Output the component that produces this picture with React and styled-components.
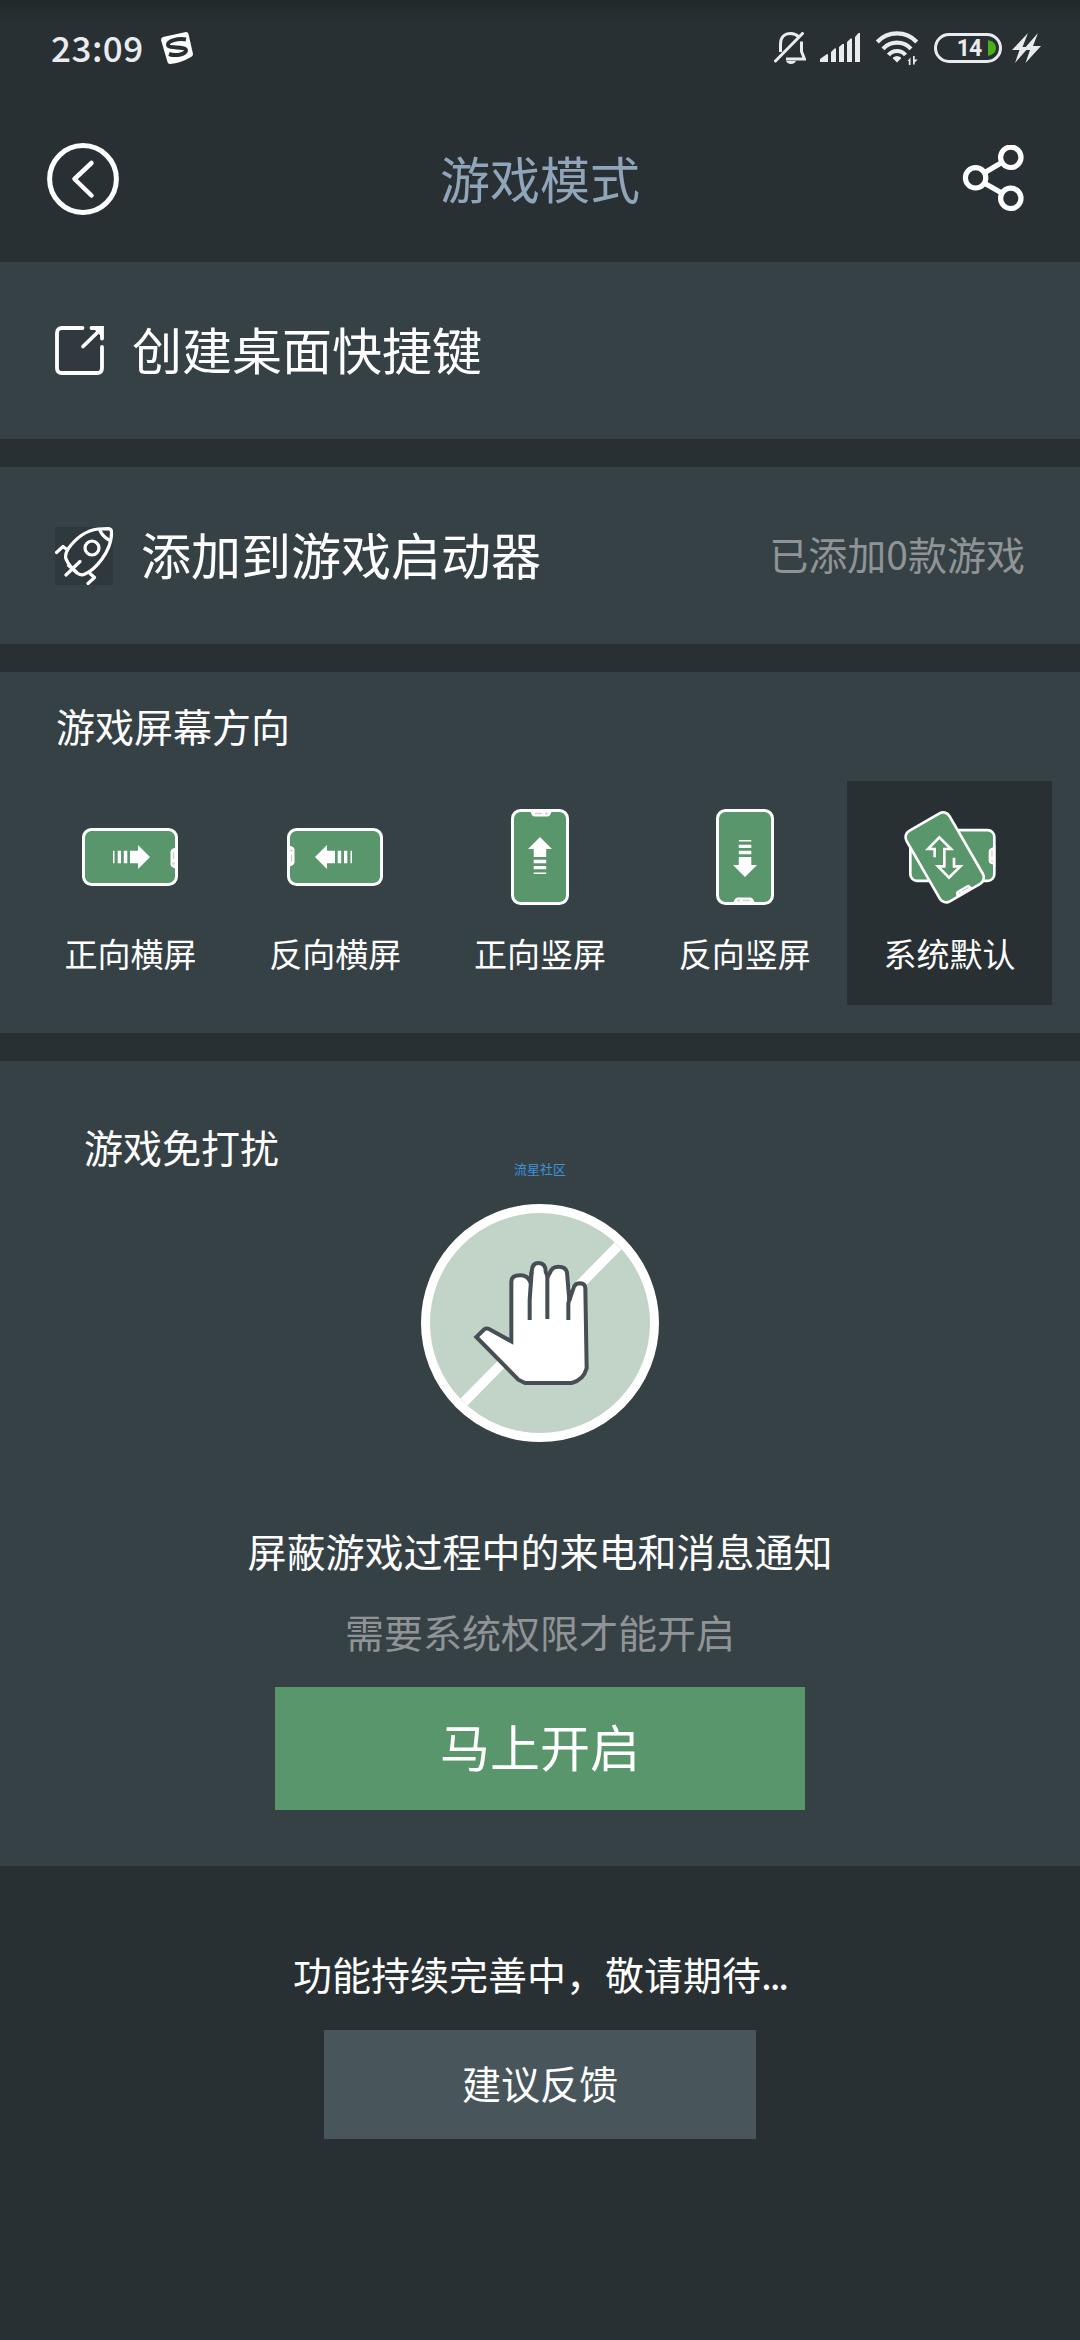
import React from "react";
import styled, { createGlobalStyle } from "styled-components";

const color = {
  page: "#293033",
  card: "#364145",
  green: "#59966b",
  slate: "#48565b",
  title: "#90a5b9",
  muted: "#909496",
  status: "#e9ebee",
};

const GlobalStyle = createGlobalStyle`
  * { box-sizing: border-box; }
  body { margin: 0; background: ${color.page}; }
  svg { display: block; flex: none; }
  button { border: 0; padding: 0; font: inherit; color: inherit; background: none; }
`;

const Screen = styled.div`
  width: 1080px;
  min-height: 2340px;
  display: flex;
  flex-direction: column;
  background: linear-gradient(#22292b 0, ${color.page} 24px);
  color: #fff;
  font-family: "Noto Sans CJK SC", "Noto Sans", sans-serif;
  font-size: 39px;
  line-height: 1;
  white-space: nowrap;
`;

const StatusBar = styled.div`
  height: 96px;
  padding: 0 39px 0 51px;
  display: flex;
  align-items: center;
  color: ${color.status};
`;

const Clock = styled.span`
  width: 110px;
  margin-bottom: 4px;
  font-size: 35px;
  font-weight: 500;
  letter-spacing: 0.5px;
`;

const StatusIcons = styled.div`
  margin-left: auto;
  display: flex;
  align-items: center;
`;

const Spacer = styled.span`
  width: ${(p) => p.$w}px;
`;

const Header = styled.header`
  height: 166px;
  padding: 0 56px 0 47px;
  display: grid;
  grid-template-columns: 72px 1fr 63px;
  align-items: center;
`;

const HeaderButton = styled.button`
  display: flex;
  justify-content: flex-end;
`;

const Title = styled.h1`
  margin: 0 0 5px;
  text-align: center;
  font-size: 50px;
  font-weight: 400;
  line-height: 50px;
  color: ${color.title};
`;

const Stack = styled.main`
  display: flex;
  flex-direction: column;
  gap: 28px;
`;

const Card = styled.section`
  background: ${color.card};
`;

const RowCard = styled(Card)`
  height: 177px;
  padding: 0 55px;
  display: flex;
  align-items: center;
`;

const RowLabel = styled.span`
  margin: 0 0 6px 28px;
  font-size: 50px;
`;

const RowValue = styled.span`
  margin: 0 0 4px auto;
  color: ${color.muted};
`;

const OrientationCard = styled(Card)`
  height: 361px;
  padding: 34px 28px 0;
`;

const SectionTitle = styled.h2`
  margin: 0;
  padding-left: 28px;
  font-size: 39px;
  line-height: 39px;
  font-weight: 400;
`;

const Options = styled.div`
  margin-top: 36px;
  display: grid;
  grid-template-columns: repeat(5, 1fr);
`;

const Option = styled.button`
  height: 224px;
  padding-top: 28px;
  display: flex;
  flex-direction: column;
  align-items: center;
  gap: 32px;
  font-size: 33px;
  line-height: 33px;
  background: ${(p) => (p.$selected ? color.page : "transparent")};
`;

const QuietCard = styled(Card)`
  height: 805px;
  padding: 66px 56px 0;
  display: flex;
  flex-direction: column;
  align-items: center;
`;

const QuietTitle = styled(SectionTitle)`
  align-self: stretch;
`;

const Credit = styled.span`
  margin-top: -4px;
  font-size: 13px;
  line-height: 14px;
  color: #3b93dc;
`;

const Line = styled.p`
  margin: ${(p) => p.$top}px 0 0;
  line-height: 40px;
  color: ${(p) => (p.$muted ? color.muted : "#fff")};
`;

const Dots = styled.span`
  letter-spacing: -2.2px;
`;

const Art = styled.div`
  margin-top: 28px;
`;

const EnableButton = styled.button`
  margin-top: 36px;
  padding-bottom: 7px;
  width: 530px;
  height: 123px;
  background: ${color.green};
  font-size: 50px;
`;

const Footer = styled.footer`
  padding-top: 87px;
  display: flex;
  flex-direction: column;
  align-items: center;
`;

const FeedbackButton = styled.button`
  margin-top: 37px;
  padding-bottom: 5px;
  width: 432px;
  height: 109px;
  background: ${color.slate};
  font-size: 39px;
`;

const InputMethodIcon = () => (
  <svg width="32" height="32" viewBox="0 0 32 32">
    <path d="M2 5 25 0q2 0 2.500 2L32 22q0 2-2 3-10 6-21 7-2 0-2.500-2L0 8q0-2 2-3z" fill="#fff" />
    <path d="M25 7.500C17 6 6.500 9 7 13 7.500 17 24 14 25 18 26 22 15 24.500 8 22" fill="none" stroke={color.page} strokeWidth="4" />
  </svg>
);

const MutedBellIcon = () => (
  <svg width="32" height="32" viewBox="0 0 32 32" fill="none" stroke={color.status} strokeWidth="3">
    <path d="M6.500 20V12C6.500 5 11 1.500 16.500 1.500q5 0 8 3.200M27.500 9.500v10l3 7.500H12" />
    <path d="M1.500 29 28.500 1.500" strokeLinecap="round" />
    <path d="M12 29h10q-1.500 3-5 3t-5-3z" fill={color.status} stroke="none" />
  </svg>
);

const SignalIcon = () => (
  <svg width="40" height="30" viewBox="0 0 40 30" fill={color.status}>
    <path d="M0 29v-3l7-5q1 0 1 1v7zM11 29V19l3.500-3.500H16V29zM19 29V14l3.500-3H24v18zM27 29V9l3.500-3.500H32V29zM35 29V4l3.500-4H40v29z" />
  </svg>
);

const WifiIcon = () => (
  <svg width="42" height="34" viewBox="0 0 42 34" fill="none" stroke={color.status} strokeWidth="4.200">
    <path d="M1.300 11a27 27 0 0 1 39.400 0M7 17.800a19 19 0 0 1 28 0M12.500 24a11 11 0 0 1 17 0" />
    <path d="M17 26.500q4-3 8 0v1L21 31.500l-4-4z" fill={color.status} stroke="none" />
    <path d="M31.500 30l3-3.500V34h-1.700v-4zM37 33.500V25h1.700v3.500h3l-3 3V33.500z" fill={color.status} stroke="none" />
  </svg>
);

const BatteryIcon = () => (
  <svg width="68" height="30" viewBox="0 0 68 30">
    <rect x="1.500" y="1.500" width="65" height="27" rx="13.500" fill="none" stroke={color.status} strokeWidth="3" />
    <path d="M54 7q8 2 8 8t-8 8z" fill="#4bb018" />
    <text x="35" y="23" textAnchor="middle" fill={color.status} fontFamily="Roboto, sans-serif" fontWeight="700" fontSize="23" letterSpacing="-1">
      14
    </text>
  </svg>
);

const BoltIcon = () => (
  <svg width="29" height="30" viewBox="0 0 29 30" fill={color.status}>
    <path d="M16 0 0 17h7.500L3 30 17 14H10.500zM26 0 11 17h7L13.500 30 29 13h-8z" />
  </svg>
);

const BackIcon = () => (
  <svg width="72" height="72" viewBox="0 0 72 72" fill="none" stroke="#fff">
    <circle cx="36" cy="36" r="33.400" strokeWidth="5" />
    <path d="M44.500 20 27.500 36l17 16.500" strokeWidth="4.500" strokeLinecap="round" strokeLinejoin="round" />
  </svg>
);

const ShareIcon = () => (
  <svg width="62" height="68" viewBox="0 0 62 68" fill="none" stroke="#fff" strokeWidth="5.200">
    <circle cx="13.600" cy="32.800" r="10.200" />
    <circle cx="48.800" cy="12.300" r="10.200" />
    <circle cx="48.800" cy="53.300" r="10.200" />
    <path d="M22.500 27.800 39.800 17.500M22.500 38.300 39.800 48" />
  </svg>
);

const ShortcutIcon = () => (
  <svg width="49" height="49" viewBox="0 0 49 49" fill="none" stroke="#fff" strokeWidth="3.800" strokeLinecap="round">
    <rect x="2" y="2" width="45" height="45" rx="5" fill="#303a3e" stroke="none" />
    <path d="M27.500 2H7Q2 2 2 7v35q0 5 5 5h35q5 0 5-5V21" />
    <path d="M28 20.500 45 4M36.500 2H47v10.500" />
    <path d="M38 2h9v9z" fill="#fff" stroke="none" />
  </svg>
);

const RocketIcon = () => (
  <svg width="58" height="58" viewBox="0 0 58 58" fill="none" stroke="#fff" strokeWidth="3.200" strokeLinecap="round" strokeLinejoin="round">
    <rect width="58" height="58" fill="#2f383c" stroke="none" />
    <path d="M53 1.600q3.500 0 3.500 3.500Q57 18 47 32 38 44 30 47q-4 2-8-1-8-7-11-14-1.500-4 2-10Q26 4 43 2z" />
    <path d="M45 3.500q3 6.500 10 10" />
    <circle cx="37" cy="21" r="7" />
    <path d="M1.500 25.500 8 19.500l4.500 3.500M35 46.500l4.500 4-6.500 6M11 48 25 34.500M13.500 38.500l8 6.500" />
  </svg>
);

const Notch = () => (
  <>
    <path d="M15.500 94Q18 93.500 18.500 91q.8-2.500 3-2.500h13q2.200 0 3 2.500.5 2.500 3 3z" fill="#fff" />
    <circle cx="22.500" cy="91.500" r="1.200" fill="#cfcfcf" />
    <path d="M27 91.500h7" stroke="#cfcfcf" strokeWidth="1.400" />
  </>
);

const PhoneIcon = ({ turn }) => (
  <svg width="96" height="96" viewBox="0 0 96 96">
    <g transform={`rotate(${turn} 48 48) translate(19 0)`}>
      <rect x="1.500" y="1.500" width="55" height="93" rx="8" fill={color.green} stroke="#fff" strokeWidth="3" />
      <Notch />
      <path d="M22.800 31h12.500v1.500H22.800zM22.800 35.700h12.500v3.300H22.800zM22.800 41.800h12.500v3.500H22.800zM22.800 48h12.500v8H41L29 68 17 56h5.800z" fill="#fff" />
    </g>
  </svg>
);

const AutoRotateIcon = () => (
  <svg width="96" height="96" viewBox="1024 447 288 288" fill="none" stroke="#fff" strokeWidth="8">
    <rect x="1049" y="510.500" width="252" height="152" rx="20" fill={color.green} />
    <path d="M1304 556q-4 8-12 8-8 2-8 10v28q0 8 8 10 8 0 12 8z" fill="#fff" stroke="none" />
    <path d="M1294 572v18M1294 600v6" stroke="#cfcfcf" strokeWidth="4" />
    <g transform="rotate(-30 1152 592)">
      <rect x="1077.500" y="470" width="149" height="244" rx="22" fill={color.green} />
      <path d="M1118 714q6-1 8-8 1-8 8-8h34q7 0 8 8 2 7 8 8z" fill="#fff" stroke="none" />
      <path d="M1135 706h5M1146 706h22" stroke="#cfcfcf" strokeWidth="4" />
    </g>
    <path d="M1122 592v-25h-20l34-35 35 35h-20v52h-19l33 34 34-34h-19v-26" />
  </svg>
);

const BlockHandIcon = () => (
  <svg width="238" height="238" viewBox="93 192 714 714">
    <circle cx="450" cy="549" r="343.500" fill="#c2d3c7" stroke="#fff" strokeWidth="27" />
    <path d="M684 318 222 786" stroke="#fff" strokeWidth="29" />
    <path
      d="M405 729 385 719 259 591 283 568Q289 563 297 567L364 604V425Q364 406 391 406 412 406 420 424L426 389Q428 369 446 369 467 369 467 395L473 410 480 398Q486 380 505 380 528 380 531 398L538 480 552 440Q557 430 570 430 586 431 586 445L590 685Q580 721 545 729Z"
      fill="#fff" stroke="#454f54" strokeWidth="12" />
    <path d="M419 540V480L425 395M472 537V405M535 540V490L542 465" fill="none" stroke="#454f54" strokeWidth="12" />
  </svg>
);

const orientations = [
  { label: "正向横屏", icon: <PhoneIcon turn={-90} /> },
  { label: "反向横屏", icon: <PhoneIcon turn={90} /> },
  { label: "正向竖屏", icon: <PhoneIcon turn={180} /> },
  { label: "反向竖屏", icon: <PhoneIcon turn={0} /> },
  { label: "系统默认", icon: <AutoRotateIcon />, selected: true },
];

export default function App() {
  return (
    <Screen>
      <GlobalStyle />
      <StatusBar>
        <Clock>23:09</Clock>
        <InputMethodIcon />
        <StatusIcons>
          <MutedBellIcon />
          <Spacer $w={14} />
          <SignalIcon />
          <Spacer $w={16} />
          <WifiIcon />
          <Spacer $w={16} />
          <BatteryIcon />
          <Spacer $w={10} />
          <BoltIcon />
        </StatusIcons>
      </StatusBar>
      <Header>
        <HeaderButton aria-label="返回">
          <BackIcon />
        </HeaderButton>
        <Title>游戏模式</Title>
        <HeaderButton aria-label="分享">
          <ShareIcon />
        </HeaderButton>
      </Header>
      <Stack>
        <RowCard>
          <ShortcutIcon />
          <RowLabel>创建桌面快捷键</RowLabel>
        </RowCard>
        <RowCard>
          <RocketIcon />
          <RowLabel>添加到游戏启动器</RowLabel>
          <RowValue>已添加0款游戏</RowValue>
        </RowCard>
        <OrientationCard>
          <SectionTitle>游戏屏幕方向</SectionTitle>
          <Options>
            {orientations.map((o) => (
              <Option key={o.label} $selected={o.selected}>
                {o.icon}
                {o.label}
              </Option>
            ))}
          </Options>
        </OrientationCard>
        <QuietCard>
          <QuietTitle>游戏免打扰</QuietTitle>
          <Credit>流星社区</Credit>
          <Art>
            <BlockHandIcon />
          </Art>
          <Line $top={88}>屏蔽游戏过程中的来电和消息通知</Line>
          <Line $top={41} $muted>需要系统权限才能开启</Line>
          <EnableButton>马上开启</EnableButton>
        </QuietCard>
      </Stack>
      <Footer>
        <Line $top={0}>
          功能持续完善中，敬请期待<Dots>...</Dots>
        </Line>
        <FeedbackButton>建议反馈</FeedbackButton>
      </Footer>
    </Screen>
  );
}
